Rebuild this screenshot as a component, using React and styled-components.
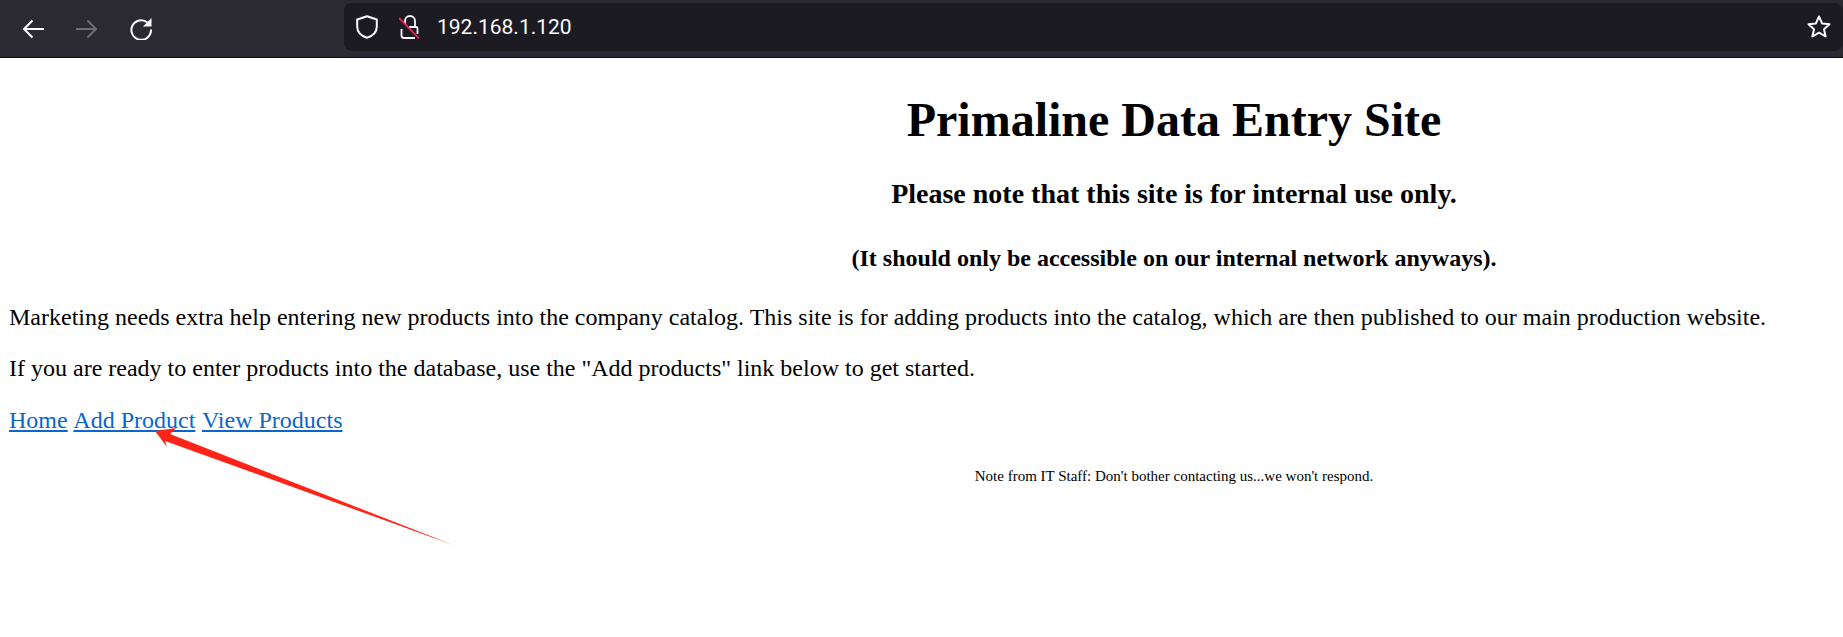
import styled, { createGlobalStyle, css } from "styled-components";

const GlobalStyle = createGlobalStyle`
  html, body {
    margin: 0;
    background: #fff;
  }
  body {
    font-family: "Liberation Serif", "Times New Roman", serif;
    color: #000;
  }
`;

export default function App() {
  return (
    <>
      <GlobalStyle />
      <Toolbar>
        <NavIcons>
          <svg width="22" height="22" viewBox="0 0 22 22" fill="none" stroke="#fbfbfe" strokeWidth="2">
            <path d="M22 11H2M10.500 2.500L2 11l8.500 8.500" />
          </svg>
          <svg width="22" height="22" viewBox="0 0 22 22" fill="none" stroke="#6f6e75" strokeWidth="2">
            <path d="M0 11h20M11.500 2.500L20 11l-8.500 8.500" />
          </svg>
          <svg width="22" height="22" viewBox="0 0 22 22" fill="none" stroke="#fbfbfe" strokeWidth="2">
            <path d="M17.500 4.500A9.800 9.800 0 1 0 21 11.500" />
            <path d="M21.500 0v8.500H13z" fill="#fbfbfe" stroke="none" />
          </svg>
        </NavIcons>
        <UrlBar>
          <svg width="22" height="24" viewBox="0 0 22 24" fill="none" stroke="#fbfbfe" strokeWidth="2">
            <path d="M11 1.200l9.800 3.300v7c0 5.500-4.300 9.500-9.800 11.300C5.500 21 1.200 17 1.200 11.500v-7z" strokeLinejoin="round" />
          </svg>
          <LockIcon width="20" height="24" viewBox="0 0 20 24" fill="none">
            <path d="M6 9V6a5 5 0 0 1 10 0v6M2.500 14v6.500a2.500 2.500 0 0 0 2.500 2.500h11M10 12h7a1.500 1.500 0 0 1 1.500 1.500V19" stroke="#fbfbfe" strokeWidth="1.800" />
            <path d="M0 3l20 20.500" stroke="#e22850" strokeWidth="1.800" />
          </LockIcon>
          <UrlText>192.168.1.120</UrlText>
          <StarIcon width="24" height="24" viewBox="0 0 24 24" fill="none" stroke="#fbfbfe" strokeWidth="2" strokeLinejoin="round">
            <path d="M12 1.500l3.100 6.900 7.400.8-5.500 5 1.600 7.300-6.600-3.800-6.600 3.800 1.600-7.300-5.500-5 7.400-.8z" />
          </StarIcon>
        </UrlBar>
      </Toolbar>
      <Page>
        <Heading>Primaline Data Entry Site</Heading>
        <SubHeading>Please note that this site is for internal use only.</SubHeading>
        <MinorHeading>(It should only be accessible on our internal network anyways).</MinorHeading>
        <Intro>
          <p>
            Marketing needs extra help entering new products into the company catalog. This site is
            for adding products into the catalog, which are then published to our main production
            website.
          </p>
          <p>
            If you are ready to enter products into the database, use the "Add products" link below
            to get started.
          </p>
          <LinkRow>
            <NavLink href="#">Home</NavLink> <NavLink href="#">Add Product</NavLink>{" "}
            <NavLink href="#">View Products</NavLink>
          </LinkRow>
        </Intro>
        <Note>Note from IT Staff: Don't bother contacting us...we won't respond.</Note>
      </Page>
      <Arrow width="1843" height="637" viewBox="0 0 1843 637">
        <defs>
          <linearGradient id="arrowFade" gradientUnits="userSpaceOnUse" x1="300" y1="482" x2="456" y2="546">
            <stop offset="0" stopColor="#ff2418" />
            <stop offset="0.85" stopColor="#ff2418" />
            <stop offset="1" stopColor="#ff2418" stopOpacity="0.25" />
          </linearGradient>
        </defs>
        <path d="M155 431L176 428L170 434L456 546L165 441L167 447Z" fill="url(#arrowFade)" />
      </Arrow>
    </>
  );
}

// the original page is wider than the window, so its centred lines sit right of the middle
const shiftedCentre = css`
  padding-left: 505px;
  text-align: center;
`;

const Toolbar = styled.header`
  height: 57px;
  display: flex;
  background: #2b2a33;
  border-bottom: 1px solid #0c0c0d;
  padding-left: 22px;
`;

const NavIcons = styled.div`
  display: flex;
  align-items: center;
  gap: 32px;
  flex-shrink: 0;
`;

const UrlBar = styled.div`
  flex: 1;
  height: 48px;
  margin: 3px 0 0 192px;
  display: flex;
  align-items: center;
  padding-left: 12px;
  background: #1c1b22;
  border-radius: 8px;
`;

const LockIcon = styled.svg`
  flex-shrink: 0;
  margin: 0 18px 0 21px;
`;

const UrlText = styled.span`
  flex: 1;
  font-family: "Roboto", "Liberation Sans", sans-serif;
  font-size: 21px;
  color: #fbfbfe;
`;

const StarIcon = styled.svg`
  margin-right: 12px;
`;

const Page = styled.main`
  padding: 0 9px;
  font-size: 24px;
`;

const Heading = styled.h1`
  ${shiftedCentre}
  margin: 34px 0 0;
  font-size: 48px;
`;

const SubHeading = styled.h2`
  ${shiftedCentre}
  margin: 31px 0 0;
  font-size: 28px;
`;

const MinorHeading = styled.h3`
  ${shiftedCentre}
  margin: 35px 0 0;
  font-size: 24px;
`;

const Intro = styled.section`
  margin-top: 32px;
  display: flex;
  flex-direction: column;
  gap: 24px;

  p {
    margin: 0;
  }
`;

const LinkRow = styled.p`
  && {
    margin-top: 1px;
  }
`;

const NavLink = styled.a`
  margin-right: 1px;
  color: #0a66cc;
  text-decoration: underline;
`;

const Note = styled.p`
  ${shiftedCentre}
  margin: 34px 0 0;
  font-size: 15px;
`;

const Arrow = styled.svg`
  position: absolute;
  top: 0;
  left: 0;
  pointer-events: none;
`;
